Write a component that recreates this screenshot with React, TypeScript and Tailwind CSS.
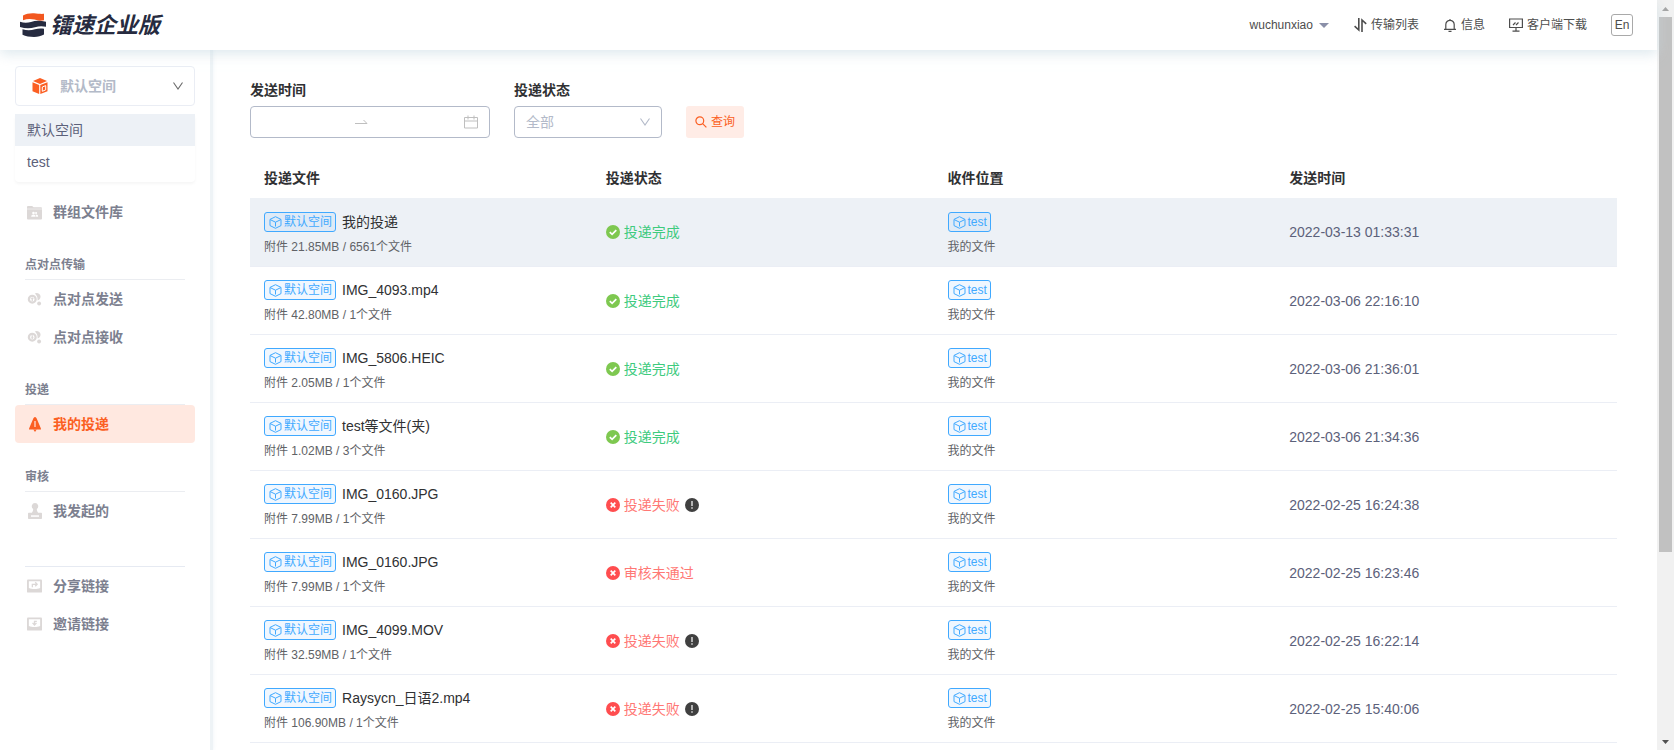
import React from 'react'
import clsx from 'clsx'

type Status = 'done' | 'failed' | 'rejected'

interface IDelivery {
  name: string
  size: string
  count: number
  status: Status
  time: string
}

const deliveries: IDelivery[] = [
  { name: '我的投递', size: '21.85MB', count: 6561, status: 'done', time: '2022-03-13 01:33:31' },
  { name: 'IMG_4093.mp4', size: '42.80MB', count: 1, status: 'done', time: '2022-03-06 22:16:10' },
  { name: 'IMG_5806.HEIC', size: '2.05MB', count: 1, status: 'done', time: '2022-03-06 21:36:01' },
  { name: 'test等文件(夹)', size: '1.02MB', count: 3, status: 'done', time: '2022-03-06 21:34:36' },
  { name: 'IMG_0160.JPG', size: '7.99MB', count: 1, status: 'failed', time: '2022-02-25 16:24:38' },
  { name: 'IMG_0160.JPG', size: '7.99MB', count: 1, status: 'rejected', time: '2022-02-25 16:23:46' },
  { name: 'IMG_4099.MOV', size: '32.59MB', count: 1, status: 'failed', time: '2022-02-25 16:22:14' },
  { name: 'Raysycn_日语2.mp4', size: '106.90MB', count: 1, status: 'failed', time: '2022-02-25 15:40:06' },
]

const statusText: Record<Status, string> = {
  done: '投递完成',
  failed: '投递失败',
  rejected: '审核未通过',
}

const LogoMark = () => (
  <svg width="26" height="24" viewBox="0 0 26 24" aria-hidden="true">
    <path d="M3 2.5C6 .6 10 0 14 .2c3.500.2 6.500 1 10 .6v6.400c-3.500.8-6.500.5-9.500-.6-4-1-7.500-.9-11.500.6z" fill="#f2571f" />
    <path d="M0 8.800c4 1.300 7.500 1.200 11 .2 4.500-1.500 9-1.500 15-.2v5c-4-1-7.500-.7-11 .4-5 1.500-10 1.300-15-.2z" fill="#262b40" />
    <path d="M2.500 16.200c4.500 1.500 8.500 1.200 12.500.1 3-.9 6-1 9-.5v5.700c-3 1.600-6 2.400-10 2.400s-8.500-.5-11.500-2.200z" fill="#262b40" />
  </svg>
)

const CubeSolid = () => (
  <svg width="16" height="17" viewBox="0 0 16 17" aria-hidden="true">
    <path d="M8 0l7 3-7 3-7-3z" fill="#fb5f23" />
    <path d="M.5 4.200l6.700 2.900V16L.5 13.200z" fill="#fb5f23" />
    <path d="M15.500 4.200L8.300 7.100V16l7.200-2.800z" fill="#fb5f23" />
    <path d="M13.700 7.600l-3.400 1.400v4.300l3.400-1.400z" fill="none" stroke="#fff" />
  </svg>
)

const CubeLine = () => (
  <svg width="13" height="13" viewBox="0 0 13 13" fill="none" stroke="currentColor" aria-hidden="true">
    <path d="M6.500.7l5.500 2.700v6.200l-5.500 2.700L1 9.600V3.400z" strokeLinejoin="round" />
    <path d="M1.200 3.600l5.300 2.600 5.300-2.600M6.500 6.200v4.300" />
  </svg>
)

const Chevron = ({ className }: { className?: string }) => (
  <svg width="12" height="12" viewBox="0 0 12 12" fill="none" stroke="currentColor" className={className} aria-hidden="true">
    <path d="M1.500 2.500L6 9l4.500-6.500" strokeWidth="1.100" />
  </svg>
)

const FolderIcon = () => (
  <svg width="16" height="15" viewBox="0 0 16 15" aria-hidden="true">
    <path d="M0 1.500C0 .9.400.5 1 .5h4.500L7 2h8c.6 0 1 .4 1 1v.5H0z" fill="currentColor" />
    <path d="M0 4.100h16V14c0 .6-.4 1-1 1H1c-.6 0-1-.4-1-1z" fill="currentColor" />
    <g fill="#fff">
      <circle cx="6.900" cy="8" r="1.400" />
      <circle cx="9.700" cy="8" r="1.100" />
      <path d="M4.500 12c0-1.600 1-2.300 2.400-2.300s2.300.7 2.300 2.300z" />
      <path d="M9.700 12c0-.9-.1-1.500-.6-2.200 1.600-.4 2.800.3 2.800 2.200z" />
    </g>
  </svg>
)

const PeerIcon = ({ down }: { down?: boolean }) => (
  <svg width="16" height="14" viewBox="0 0 16 14" aria-hidden="true">
    <path d="M8.300 1.200a4 4 0 1 1 3 7.300c.2-3-.8-5.400-3-7.300z" fill="currentColor" />
    <circle cx="12.900" cy="11.700" r="2.100" fill="currentColor" />
    <circle cx="5.600" cy="7.200" r="3.600" fill="#fff" stroke="currentColor" strokeWidth="2.400" />
    <path
      d={down ? 'M5.600 9.400L3.800 7.400h1.100V5h1.400v2.400h1.100z' : 'M5.600 5L3.800 7h1.100v2.400h1.400V7h1.100z'}
      fill="currentColor"
    />
  </svg>
)

const DeliverIcon = () => (
  <svg width="14" height="15" viewBox="0 0 14 15" aria-hidden="true">
    <path d="M7 0c1 0 1.500 1 1.900 2l3.600 8.500c.4.800.5 1.500.5 2H1c0-.5.1-1.200.5-2L5.100 2C5.500 1 6 0 7 0z" fill="currentColor" />
    <path d="M6.400 4h1.200v6H6.400z" fill="#ffe8e0" />
    <path d="M5.300 12.500h3.400L7 15z" fill="currentColor" />
  </svg>
)

const StampIcon = () => (
  <svg width="14" height="16" viewBox="0 0 14 16" aria-hidden="true">
    <path
      d="M7 0a3.300 3.300 0 0 1 1.800 6c0 1.500.5 2.800 1.400 3.700H13c.6 0 1 .4 1 1V15c0 .6-.4 1-1 1H1c-.6 0-1-.4-1-1v-4.300c0-.6.400-1 1-1h2.800C4.700 8.800 5.200 7.500 5.200 6A3.300 3.300 0 0 1 7 0z"
      fill="currentColor"
    />
    <path d="M3 12.300h8v1.500H3z" fill="#fff" />
  </svg>
)

const LinkIcon = ({ invite }: { invite?: boolean }) => (
  <svg width="16" height="14" viewBox="0 0 16 14" aria-hidden="true">
    <rect width="16" height="14" rx="1" fill="currentColor" />
    <path d="M2 1.800h12v7.400c-2 .8-3.500 1-6 1s-4-.2-6-1z" fill="#fff" />
    <path
      d={invite ? 'M10.500 4.200H8v3.600M5.900 5.800L8 8.200l2.100-2.400' : 'M5.700 8.300V5.200h4.800M8.800 3l2 2.200-2 2.100'}
      fill="none"
      stroke="currentColor"
      strokeWidth="1.400"
    />
  </svg>
)

const SidebarItem = ({
  icon,
  label,
  active,
}: {
  icon: React.ReactNode
  label: string
  active?: boolean
}) => (
  <a
    href="#"
    className={clsx(
      'flex items-center h-[38px] pl-3 rounded text-sm font-bold',
      active ? 'bg-[#ffe8e0] text-[#fb5f23]' : 'text-[#7c808f]'
    )}
  >
    <span
      className={clsx(
        'flex justify-center w-[15px] mr-[11px]',
        active ? 'text-[#fb5f23]' : 'text-[#dcd8d7]'
      )}
    >
      {icon}
    </span>
    {label}
  </a>
)

const SidebarHeading = ({ children }: { children: React.ReactNode }) => (
  <h2 className="flex items-end h-[49px] mx-[10px] pb-[5px] border-b border-[#ebedf1] text-xs leading-[18px] font-bold text-[#7c808f]">
    {children}
  </h2>
)

const Sidebar = () => (
  <aside className="shrink-0 w-[213px] pt-4 pl-[15px] pr-[15px] border-r-[3px] border-[#eef3f6] shadow-[1px_0_3px_rgba(220,232,238,0.3)]">
    <button
      type="button"
      className="flex items-center w-full h-10 pl-4 pr-[10px] border border-[#eaedf4] rounded text-sm font-bold text-[#b3bac8]"
    >
      <CubeSolid />
      <span className="ml-3 mr-auto">默认空间</span>
      <Chevron className="text-[#6b6b6b]" />
    </button>
    <ul className="mt-2 pb-1 rounded text-sm text-[#5c617a] shadow-[0_2px_3px_rgba(0,0,0,0.04)]">
      <li className="flex items-center h-8 pl-3 bg-[#edf1f6]">默认空间</li>
      <li className="flex items-center h-8 pl-3">test</li>
    </ul>
    <nav className="mt-[11px]">
      <SidebarItem icon={<FolderIcon />} label="群组文件库" />
      <SidebarHeading>点对点传输</SidebarHeading>
      <SidebarItem icon={<PeerIcon />} label="点对点发送" />
      <SidebarItem icon={<PeerIcon down />} label="点对点接收" />
      <SidebarHeading>投递</SidebarHeading>
      <SidebarItem icon={<DeliverIcon />} label="我的投递" active />
      <SidebarHeading>审核</SidebarHeading>
      <SidebarItem icon={<StampIcon />} label="我发起的" />
      <hr className="mt-9 mx-[10px] border-[#e6eaf2]" />
      <SidebarItem icon={<LinkIcon />} label="分享链接" />
      <SidebarItem icon={<LinkIcon invite />} label="邀请链接" />
    </nav>
  </aside>
)

const Header = () => (
  <header className="relative z-10 flex items-center h-[50px] pl-5 pr-6 bg-white text-xs text-[#4d4d4d] shadow-[0_4px_12px_rgba(200,218,226,0.6)]">
    <a href="#" className="flex items-center gap-1 text-[22px] leading-none font-bold italic text-[#262b40]">
      <LogoMark />
      <span className="pt-[2px]">镭速企业版</span>
    </a>
    <div className="flex items-center ml-auto">
      <button type="button" className="flex items-center gap-[6px]">
        wuchunxiao
        <svg width="10" height="5" viewBox="0 0 10 5" aria-hidden="true">
          <path d="M0 0h10L5 5z" fill="#8a8fa8" />
        </svg>
      </button>
      <button type="button" className="flex items-center gap-1 ml-[25px]">
        <svg width="13" height="14" viewBox="0 0 13 14" fill="none" stroke="currentColor" strokeWidth="1.600" aria-hidden="true">
          <path d="M4.800 0v12L.6 8.200M8 14V2l4.200 3.800" />
        </svg>
        传输列表
      </button>
      <button type="button" className="flex items-center gap-[5px] ml-[25px]">
        <svg width="12" height="13" viewBox="0 0 12 13" fill="none" stroke="currentColor" strokeWidth="1.200" aria-hidden="true">
          <path d="M0 10.400h12M1.800 10.400V5.500a4.200 4.200 0 0 1 8.400 0v4.900M6 0v1.300M4.500 12.300h3" />
        </svg>
        信息
      </button>
      <button type="button" className="flex items-center gap-1 ml-6">
        <svg width="14" height="14" viewBox="0 0 14 14" fill="none" stroke="currentColor" strokeWidth="1.200" aria-hidden="true">
          <path d="M.6 1h12.800v8.500H.6zM7 9.500v3.700M3.500 13.200h7M4 7l2.500-2.500M7 7l2.500-2.500" />
        </svg>
        客户端下载
      </button>
      <button type="button" className="w-[22px] h-[22px] ml-6 border border-[#a9a9a9] rounded-[3px] text-center">
        En
      </button>
    </div>
  </header>
)

const SpaceTag = ({ children }: { children: React.ReactNode }) => (
  <span className="inline-flex items-center gap-[2px] h-5 pl-1 pr-[3px] border border-[#40a9ff] rounded-[3px] bg-[#409eff]/8 text-xs leading-none text-[#40a9ff]">
    <CubeLine />
    {children}
  </span>
)

const StatusCell = ({ status }: { status: Status }) => {
  const done = status === 'done'
  return (
    <div className={clsx('flex items-center text-sm', done ? 'text-[#3ecb7e]' : 'text-[#ff7875]')}>
      <svg width="14" height="14" viewBox="0 0 14 14" className="mr-1" aria-hidden="true">
        <circle cx="7" cy="7" r="7" fill={done ? '#7ec850' : '#ff4d4f'} />
        <path
          d={done ? 'M3.800 7.200l2.300 2.200 4.200-4.300' : 'M4.700 4.700l4.600 4.600M9.300 4.700L4.700 9.300'}
          fill="none"
          stroke="#fff"
          strokeWidth="1.700"
        />
      </svg>
      {statusText[status]}
      {status === 'failed' && (
        <svg width="14" height="14" viewBox="0 0 14 14" className="ml-[5px]" aria-hidden="true">
          <circle cx="7" cy="7" r="7" fill="#404040" />
          <path d="M6.200 3h1.600v5H6.200zM6.200 9.200h1.600v1.500H6.200z" fill="#d0d0d0" />
        </svg>
      )}
    </div>
  )
}

const Filters = () => (
  <form className="flex items-end" onSubmit={(e) => e.preventDefault()}>
    <div className="w-[240px]">
      <label htmlFor="from" className="block text-sm leading-5 font-bold text-[#303133]">
        发送时间
      </label>
      <div className="flex items-center h-8 mt-[6px] px-[11px] border border-[#b3bac9] rounded text-[#bfbfbf]">
        <input id="from" type="text" className="flex-1 min-w-0 outline-none text-sm" />
        <svg width="13" height="6" viewBox="0 0 13 6" fill="none" stroke="currentColor" className="mr-1" aria-hidden="true">
          <path d="M0 4.500h12L8.500 1" />
        </svg>
        <input type="text" aria-label="结束时间" className="flex-1 min-w-0 outline-none text-sm" />
        <svg width="14" height="14" viewBox="0 0 14 14" fill="none" stroke="currentColor" aria-hidden="true">
          <path d="M.5 2.500h13v10.500H.5zM.5 6h13M4 .5v4M10 .5v4" />
        </svg>
      </div>
    </div>
    <div className="w-[148px] ml-6">
      <label htmlFor="status" className="block text-sm leading-5 font-bold text-[#303133]">
        投递状态
      </label>
      <div className="grid items-center h-8 mt-[6px] border border-[#b3bac9] rounded text-[#b3bac9]">
        <select id="status" className="col-start-1 row-start-1 w-full h-[30px] px-[11px] appearance-none outline-none text-sm">
          <option>全部</option>
        </select>
        <Chevron className="col-start-1 row-start-1 justify-self-end mr-[10px] pointer-events-none" />
      </div>
    </div>
    <button
      type="submit"
      className="flex items-center justify-center gap-1 w-[58px] h-8 ml-6 rounded-[3px] bg-[#ffece6] text-xs text-[#fb5f23]"
    >
      <svg width="12" height="12" viewBox="0 0 12 12" fill="none" stroke="currentColor" strokeWidth="1.200" aria-hidden="true">
        <circle cx="4.800" cy="4.800" r="3.900" />
        <path d="M7.600 7.600l3.800 3.800" />
      </svg>
      查询
    </button>
  </form>
)

const DeliveryTable = () => (
  <table className="w-full mt-5 table-fixed border-separate border-spacing-0 text-left">
    <thead>
      <tr className="h-10 text-sm text-[#303133]">
        <th className="pl-[14px] font-bold">投递文件</th>
        <th className="pl-[14px] font-bold">投递状态</th>
        <th className="pl-[14px] font-bold">收件位置</th>
        <th className="pl-[14px] font-bold">发送时间</th>
      </tr>
    </thead>
    <tbody>
      {deliveries.map((item, i) => (
        <tr
          key={item.time}
          className={clsx('[&>td]:border-b [&>td]:border-[#ebeef5] [&>td]:pl-[14px]', i === 0 && 'bg-[#edf1f6]')}
        >
          <td className={clsx('pb-[10px]', i === 0 ? 'pt-[14px]' : 'pt-[13px]')}>
            <div className="flex items-center h-5 gap-[6px] text-sm text-[#303133]">
              <SpaceTag>默认空间</SpaceTag>
              {item.name}
            </div>
            <div className="mt-[6px] text-xs leading-[18px] text-[#606266]">
              附件 {item.size} / {item.count}个文件
            </div>
          </td>
          <td>
            <StatusCell status={item.status} />
          </td>
          <td className={clsx('pb-[10px]', i === 0 ? 'pt-[14px]' : 'pt-[13px]')}>
            <div className="flex h-5">
              <SpaceTag>test</SpaceTag>
            </div>
            <div className="mt-[6px] text-xs leading-[18px] text-[#606266]">我的文件</div>
          </td>
          <td className="text-sm text-[#5c617a]">{item.time}</td>
        </tr>
      ))}
    </tbody>
  </table>
)

const Scrollbar = () => (
  <div className="flex flex-col items-center shrink-0 w-[17px] bg-[#f1f1f1]" aria-hidden="true">
    <svg width="17" height="17" viewBox="0 0 17 17">
      <path d="M5 11h7L8.500 7z" fill="#a3a3a3" />
    </svg>
    <div className="w-[13px] h-[535px] bg-[#c1c1c1]" />
    <svg width="17" height="17" viewBox="0 0 17 17" className="mt-auto">
      <path d="M5 7h7l-3.500 4z" fill="#505050" />
    </svg>
  </div>
)

const App = () => {
  return (
    <div className="flex h-screen overflow-hidden bg-white font-['Liberation_Sans','Noto_Sans_CJK_SC',sans-serif]">
      <div className="flex flex-col flex-1 min-w-0">
        <Header />
        <div className="flex flex-1 min-h-0">
          <Sidebar />
          <main className="flex-1 min-w-0 pt-[30px] pl-[37px] pr-10">
            <Filters />
            <DeliveryTable />
          </main>
        </div>
      </div>
      <Scrollbar />
    </div>
  )
}

export default App
